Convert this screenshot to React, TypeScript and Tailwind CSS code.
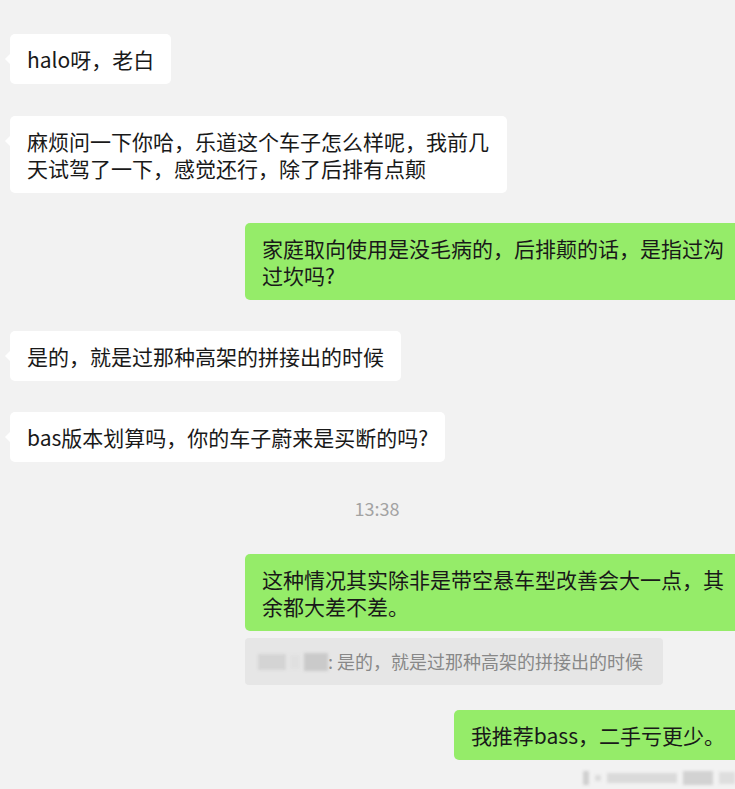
import React from "react";

type Msg =
  | { kind: "in"; text: string; mt: number }
  | { kind: "out"; text: string; mt: number; quote?: string }
  | { kind: "time"; text: string; mt: number };

const MESSAGES: Msg[] = [
  { kind: "in", text: "halo呀，老白", mt: 34 },
  {
    kind: "in",
    text: "麻烦问一下你哈，乐道这个车子怎么样呢，我前几天试驾了一下，感觉还行，除了后排有点颠",
    mt: 32,
  },
  { kind: "out", text: "家庭取向使用是没毛病的，后排颠的话，是指过沟过坎吗?", mt: 30 },
  { kind: "in", text: "是的，就是过那种高架的拼接出的时候", mt: 31 },
  { kind: "in", text: "bas版本划算吗，你的车子蔚来是买断的吗?", mt: 31 },
  { kind: "time", text: "13:38", mt: 34 },
  {
    kind: "out",
    text: "这种情况其实除非是带空悬车型改善会大一点，其余都大差不差。",
    mt: 34,
    quote: "是的，就是过那种高架的拼接出的时候",
  },
  { kind: "out", text: "我推荐bass，二手亏更少。", mt: 25 },
];

function InBubble({ text }: { text: string }) {
  return (
    <div className="relative ml-[10px] max-w-[497px] self-start rounded-[5px] bg-white px-[17px] py-[11.5px] text-[21px] leading-[27px] text-[#191919]">
      <span className="absolute left-[-5px] top-[20px] h-0 w-0 border-y-[5px] border-r-[5px] border-y-transparent border-r-white" />
      {text}
    </div>
  );
}

function OutBubble({ text }: { text: string }) {
  return (
    <div className="relative mr-[-7px] max-w-[497px] self-end rounded-[5px] bg-[#95ec69] px-[17px] py-[11.5px] text-[21px] leading-[27px] text-[#191919]">
      {text}
    </div>
  );
}

function Quote({ text }: { text: string }) {
  return (
    <div className="mr-[72px] mt-[7px] flex w-[418px] items-center self-end rounded-[4px] bg-[#e6e6e6] px-[13px] py-[10px] text-[18px] leading-[27px] text-[#888888]">
      <span className="flex items-center gap-[4px] blur-[1.5px]">
        <span className="h-[16px] w-[28px] bg-[#d4d4d4]" />
        <span className="h-[14px] w-[10px] bg-[#e0e0e0]" />
        <span className="h-[18px] w-[24px] bg-[#cacaca]" />
      </span>
      <span>: {text}</span>
    </div>
  );
}

export default function App() {
  return (
    <div
      className="relative flex h-[789px] w-[735px] flex-col overflow-hidden bg-[#f2f2f2]"
      style={{ fontFamily: '"Noto Sans CJK SC", "Microsoft YaHei", sans-serif' }}
    >
      {MESSAGES.map((m, i) => {
        if (m.kind === "time") {
          return (
            <div
              key={i}
              className="self-center pl-[19px] text-[18px] leading-[24px] text-[#a3a3a3]"
              style={{ marginTop: m.mt }}
            >
              {m.text}
            </div>
          );
        }
        return (
          <div key={i} className="flex flex-col" style={{ marginTop: m.mt }}>
            {m.kind === "in" ? <InBubble text={m.text} /> : <OutBubble text={m.text} />}
            {m.kind === "out" && m.quote && <Quote text={m.quote} />}
          </div>
        );
      })}

      {/* blurred watermark */}
      <div className="absolute bottom-[4px] right-0 flex items-center gap-[6px] blur-[1.5px]">
        <span className="h-[14px] w-[6px] bg-[#d0d0d0]" />
        <span className="h-[6px] w-[6px] bg-[#dcdcdc]" />
        <span className="h-[10px] w-[70px] bg-[#dadada]" />
        <span className="h-[14px] w-[30px] bg-[#d2d2d2]" />
        <span className="h-[12px] w-[16px] bg-[#dedede]" />
      </div>
    </div>
  );
}
